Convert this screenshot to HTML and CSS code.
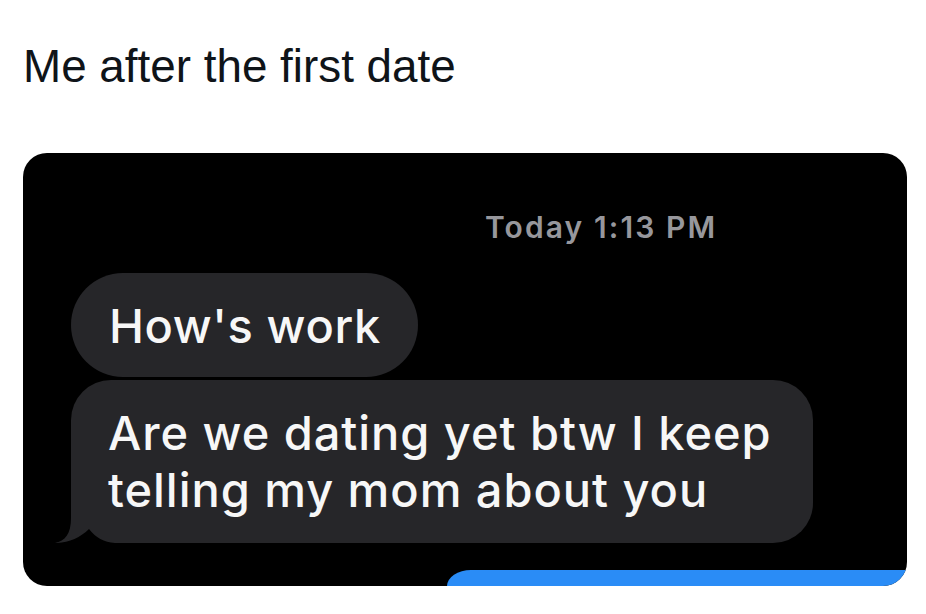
FILE: index.html
```html
<!DOCTYPE html>
<html>
<head>
<meta charset="utf-8">
<link rel="stylesheet" href="styles.css">
</head>
<body>
<div class="post">
  <p class="caption">Me after the first date</p>
  <div class="shot">
    <div class="stamp">Today 1:13 PM</div>
    <div class="bubble first">How's work</div>
    <div class="bubble last">Are we dating yet btw I keep telling my mom about you
      <svg class="tail" viewBox="0 0 60 45" width="60" height="45" aria-hidden="true">
        <path d="M14 45 L0 45 C10 43 16 36 16 20 L16 45 Z" fill="#262629"/>
        <path d="M-1 45 C12 45.5 25 40 34 31 C41 40 50 45 62 45 Z" fill="#000"/>
      </svg>
    </div>
    <div class="outgoing"></div>
  </div>
</div>
</body>
</html>
```
FILE: styles.css
```css
html, body {
  margin: 0;
  padding: 0;
  background: #ffffff;
}

.post {
  display: flex;
  flex-direction: column;
  padding: 44px 0 0 23px;
}

.caption {
  margin: 0;
  font-family: "Liberation Sans", Arial, sans-serif;
  font-size: 45.8px;
  line-height: 46px;
  color: #0f1419;
}

.shot {
  margin-top: 63px;
  width: 884px;
  height: 433px;
  box-sizing: border-box;
  background: #000;
  border-radius: 24px;
  overflow: hidden;
  display: flex;
  flex-direction: column;
  align-items: flex-start;
  padding-top: 56px;
}

.stamp {
  margin-left: 462px;
  font-family: Inter, "Liberation Sans", sans-serif;
  font-weight: 600;
  font-size: 30px;
  line-height: 36px;
  letter-spacing: 2.1px;
  color: #97979c;
}

.bubble {
  position: relative;
  box-sizing: border-box;
  margin-left: 48px;
  background: #262629;
  color: #f7f7f7;
  font-family: Inter, "Liberation Sans", sans-serif;
  font-weight: 500;
  font-size: 47px;
  line-height: 57px;
  letter-spacing: 0.6px;
}

.first {
  margin-top: 28px;
  padding: 24px 37px 23px 38px;
  border-radius: 52px;
}

.last {
  margin-top: 3px;
  width: 742px;
  padding: 24px 28px 25px 37px;
  border-radius: 40px;
  border-bottom-left-radius: 0;
  letter-spacing: 0.95px;
}

.tail {
  position: absolute;
  left: -16px;
  bottom: 0;
  display: block;
}

.outgoing {
  margin-top: auto;
  align-self: flex-end;
  width: 460px;
  height: 16px;
  background: #2a8cf6;
  border-top-left-radius: 24px 16px;
}
```
